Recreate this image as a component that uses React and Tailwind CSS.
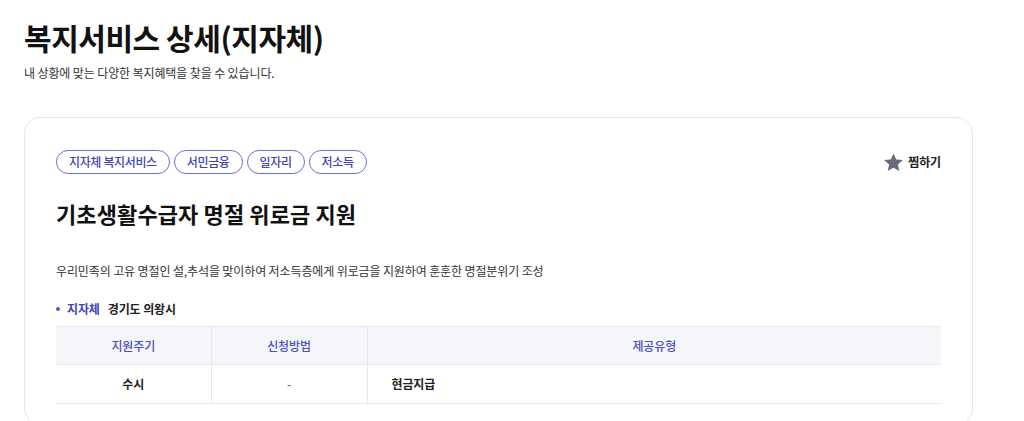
import React from 'react';

const tags = ['지자체 복지서비스', '서민금융', '일자리', '저소득'];

const App = () => {
  return (
    <div className="min-h-screen bg-white font-['Noto_Sans_CJK_KR','Noto_Sans',sans-serif] text-[#111]">
      <div className="px-6 pt-[19px]">
        <h1 className="text-[30px] leading-[36px] font-bold tracking-[-0.015em] text-[#111]">복지서비스 상세(지자체)</h1>
        <p className="mt-[9px] text-[12px] leading-[18px] tracking-[-0.01em] text-[#333]">
          내 상황에 맞는 다양한 복지혜택을 찾을 수 있습니다.
        </p>

        <div className="mt-[35px] w-[949px] rounded-2xl border border-[#e6e8ec] pl-[31px] pr-[31px] pt-8 pb-5">
          {/* tags + bookmark */}
          <div className="flex items-center justify-between">
            <div className="flex gap-1">
              {tags.map((t) => (
                <span
                  key={t}
                  className="h-6 px-3 flex items-center rounded-full border border-[#6a6fd6] text-[12px] tracking-[-0.03em] text-[#3f44b8] font-medium"
                >
                  {t}
                </span>
              ))}
            </div>
            <button className="flex items-center gap-[3px] text-[12px] font-bold tracking-[-0.01em] text-[#222]">
              <svg width="23" height="23" viewBox="0 0 24 24" fill="#6b6b78">
                <path d="M12 2.5l2.9 6.3 6.9.7-5.2 4.6 1.5 6.8L12 17.4l-6.1 3.5 1.5-6.8L2.2 9.5l6.9-.7z" />
              </svg>
              찜하기
            </button>
          </div>

          <h2 className="mt-6 text-[22px] leading-[30px] font-bold tracking-[0.005em] text-[#111]">
            기초생활수급자 명절 위로금 지원
          </h2>

          <p className="mt-[34px] text-[12px] leading-[18px] tracking-[-0.01em] text-[#333]">
            우리민족의 고유 명절인 설,추석을 맞이하여 저소득층에게 위로금을 지원하여 훈훈한 명절분위기 조성
          </p>

          <div className="mt-5 flex items-center text-[12px] leading-[18px] font-bold tracking-[-0.01em]">
            <span className="w-1 h-1 rounded-full bg-[#4f55c9] mr-[7px]"></span>
            <span className="text-[#3f44b8]">지자체</span>
            <span className="ml-[8px] text-[#222]">경기도 의왕시</span>
          </div>

          <table className="mt-2 w-full border-collapse text-[12px] tracking-[-0.01em]">
            <thead>
              <tr className="bg-[#f5f6f9] h-[38px] border-t border-b border-[#e6e8ec]">
                <th className="w-[155px] font-medium text-[#4a50c4] border-r border-[#e6e8ec]">지원주기</th>
                <th className="w-[156px] font-medium text-[#4a50c4] border-r border-[#e6e8ec]">신청방법</th>
                <th className="font-medium text-[#4a50c4]">제공유형</th>
              </tr>
            </thead>
            <tbody>
              <tr className="h-[39px] border-b border-[#e6e8ec]">
                <td className="text-center font-bold text-[#222] border-r border-[#e6e8ec]">수시</td>
                <td className="text-center text-[#555] border-r border-[#e6e8ec]">-</td>
                <td className="pl-6 font-bold text-[#222]">현금지급</td>
              </tr>
            </tbody>
          </table>
        </div>
      </div>
    </div>
  );
};

export default App;
